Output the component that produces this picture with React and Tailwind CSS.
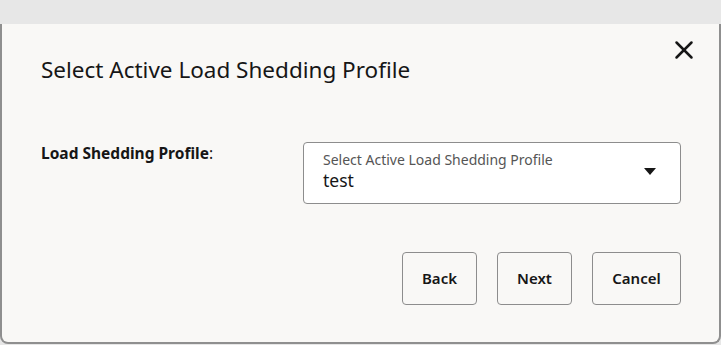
import React from 'react';
import { X } from 'lucide-react';

const font = { fontFamily: '"Noto Sans", "Open Sans", sans-serif' };

const App = () => {
  return (
    <div className="h-[345px] w-[721px] overflow-hidden bg-[#e7e7e7] pt-[24px]" style={font}>
      <div className="relative h-[320px] border-x-2 border-b-2 border-[#8f8f8f] rounded-b-lg bg-[#f9f8f6] pl-[39px] pr-[38px]">
        <button className="absolute right-[20px] top-[11px] text-[#161616]">
          <X size={30} strokeWidth={2} />
        </button>

        <h1 className="pt-[30px] text-[22.5px] leading-[32px] font-normal text-[#161616]">Select Active Load Shedding Profile</h1>

        {/* Form row */}
        <div className="mt-[56px] flex items-start">
          <div className="w-[262px] shrink-0 text-[15.5px] leading-[22px] font-bold text-[#161616]">
            Load Shedding Profile<span className="font-normal">:</span>
          </div>
          <div className="flex h-[62px] w-[378px] shrink-0 items-center justify-between rounded-[4px] border border-[#8d8d8d] bg-white pl-[19px] pr-[24px]">
            <div className="flex flex-col pb-[4px]">
              <span className="text-[14px] leading-[18px] text-[#555]">Select Active Load Shedding Profile</span>
              <span className="text-[17.5px] leading-[22px] text-[#161616]">test</span>
            </div>
            <svg width="12" height="7" viewBox="0 0 12 7" className="mb-[4px]">
              <path d="M0 0h12L6 7z" fill="#161616" />
            </svg>
          </div>
        </div>

        {/* Actions */}
        <div className="mt-[48px] flex justify-end gap-[20px]">
          {['Back', 'Next', 'Cancel'].map((label) => (
            <button
              key={label}
              className={`h-[53px] rounded-[4px] border border-[#8d8d8d] text-[15px] font-semibold text-[#161616] ${label === 'Cancel' ? 'w-[89px]' : 'w-[75px]'}`}
            >
              {label}
            </button>
          ))}
        </div>
      </div>
    </div>
  );
};

export default App;
